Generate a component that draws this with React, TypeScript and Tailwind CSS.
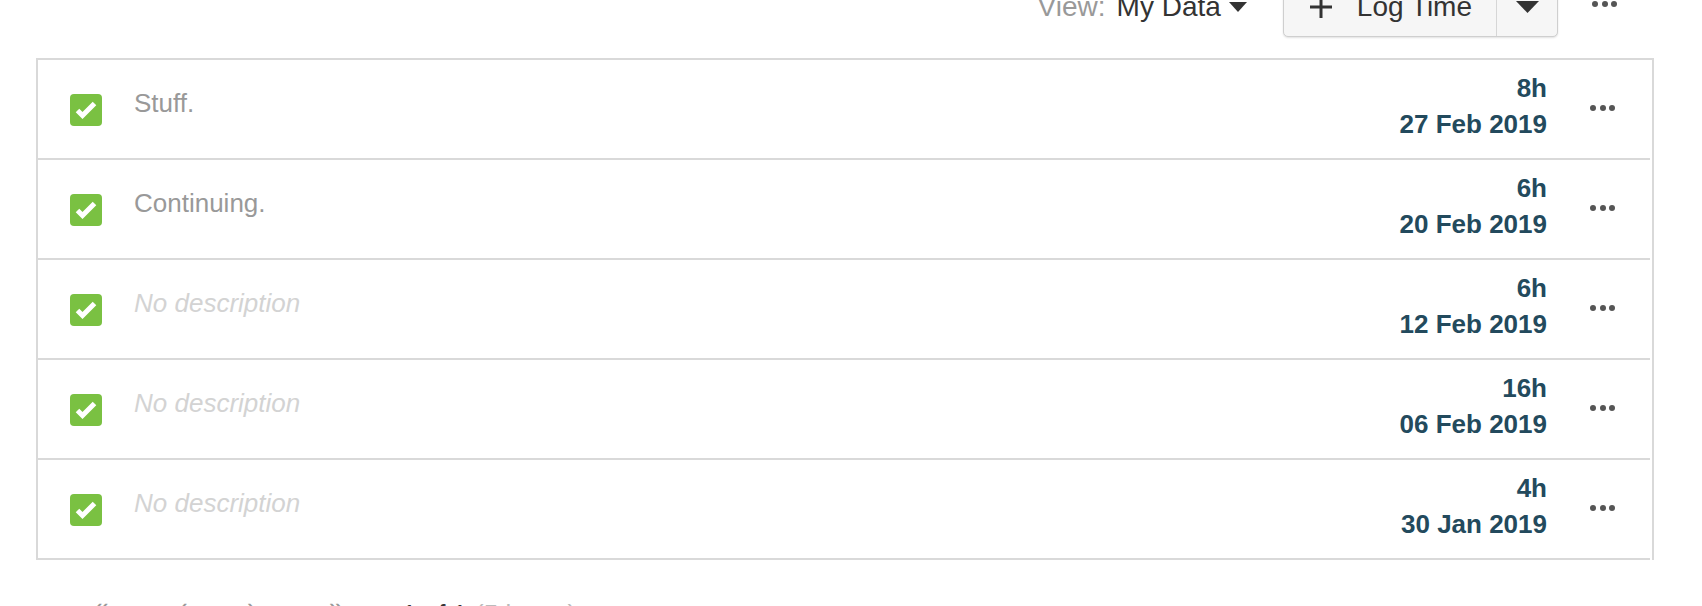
const entries = [
  { desc: "Stuff.", hours: "8h", date: "27 Feb 2019" },
  { desc: "Continuing.", hours: "6h", date: "20 Feb 2019" },
  { desc: "", hours: "6h", date: "12 Feb 2019" },
  { desc: "", hours: "16h", date: "06 Feb 2019" },
  { desc: "", hours: "4h", date: "30 Jan 2019" },
];

function Dots() {
  return (
    <div className="flex items-center gap-[3.5px]">
      <span className="w-[6px] h-[6px] rounded-full bg-[#555]" />
      <span className="w-[6px] h-[6px] rounded-full bg-[#555]" />
      <span className="w-[6px] h-[6px] rounded-full bg-[#555]" />
    </div>
  );
}

function Caret() {
  return (
    <svg className="w-[18px] h-[10px]" viewBox="0 0 18 10">
      <path d="M0 0h18L9 10z" fill="#333" />
    </svg>
  );
}

function Checked() {
  return (
    <div className="w-[32px] h-[32px] rounded-[4px] bg-[#7ac142] flex items-center justify-center shrink-0">
      <svg className="w-[32px] h-[32px]" viewBox="0 0 32 32" fill="none">
        <path d="M7.5 16.5l5 5 12-12" stroke="#fff" strokeWidth={5} strokeLinejoin="miter" />
      </svg>
    </div>
  );
}

export default function App() {
  return (
    <div className="w-[1702px] h-[606px] overflow-hidden bg-white font-['Liberation_Sans',Arial,sans-serif]">
      <div className="-mt-[23px] pl-[36px] pr-[48px]">
        {/* Header */}
        <div className="h-[60px] flex items-center justify-end pr-[37px]">
          <div className="flex items-center text-[28px]">
            <span className="text-[#999]">View:</span>
            <span className="ml-[11px] text-[#333]">My Data</span>
            <span className="ml-[8px]">
              <Caret />
            </span>
          </div>
          <div className="ml-[36px] h-[60px] flex items-stretch bg-[#f6f6f6] border border-[#cfcfcf] rounded-[5px] shadow-[0_1px_2px_rgba(0,0,0,0.12)] text-[28px] text-[#333]">
            <div className="flex items-center pl-[25px] pr-[24px] border-r border-[#d6d6d6]">
              <svg className="w-[24px] h-[24px]" viewBox="0 0 24 24">
                <path d="M12 1v22M1 12h22" stroke="#333" strokeWidth={3} />
              </svg>
              <span className="ml-[24px]">Log Time</span>
            </div>
            <div className="flex items-center pl-[19px] pr-[18px]">
              <svg className="w-[23px] h-[12px]" viewBox="0 0 23 12">
                <path d="M0 0h23L11.5 12z" fill="#333" />
              </svg>
            </div>
          </div>
          <div className="ml-[34px] -mt-[6px]">
            <Dots />
          </div>
        </div>

        {/* List */}
        <div className="mt-[21px] border-x-2 border-t-2 border-[#d9d9d9] pr-[2px]">
          {entries.map((e, i) => (
            <div key={i} className="h-[100px] border-b-2 border-[#d9d9d9] flex items-start">
              <div className="ml-[32px] mt-[34px]">
                <Checked />
              </div>
              <div className="ml-[32px] mt-[28px] text-[26px] leading-[30px]">
                {e.desc ? (
                  <span className="text-[#999]">{e.desc}</span>
                ) : (
                  <span className="italic text-[#d3d3d3]">No description</span>
                )}
              </div>
              <div className="ml-auto mt-[10px] text-right text-[26px] leading-[36px] font-bold text-[#234a5d]">
                <div>{e.hours}</div>
                <div>{e.date}</div>
              </div>
              <div className="ml-[43px] mr-[35px] mt-[45px]">
                <Dots />
              </div>
            </div>
          ))}
        </div>

        {/* Pagination */}
        <div className="mt-[35px] flex items-start text-[26px] text-[#999]">
          <span className="ml-[58px] w-[85px] -mt-[7px]">«</span>
          <span className="w-[68px] -mt-[7px]">‹</span>
          <span className="w-[82px] -mt-[7px]">›</span>
          <span className="w-[73px] -mt-[7px]">»</span>
          <span className="text-[#333]">1 of 1</span>
          <span className="ml-[8px] text-[#bbb]">(5 items)</span>
        </div>
      </div>
    </div>
  );
}
